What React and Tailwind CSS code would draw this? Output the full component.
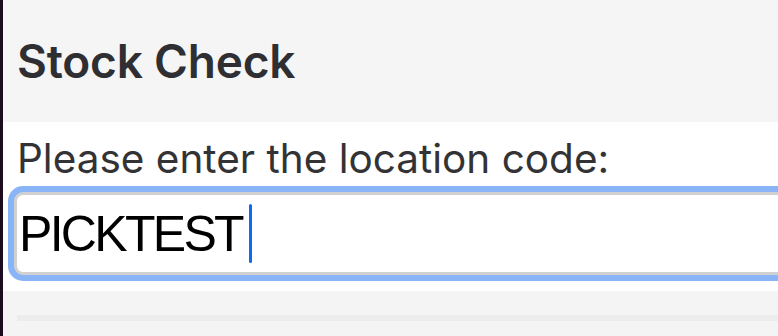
import React from 'react';

export default function App() {
  return (
    <div className="h-[336px] w-[778px] overflow-hidden flex border-l-[3px] border-[#1d0c1f] bg-[#f4f4f4]">
      <div className="flex-1 flex flex-col min-w-0">
        {/* Header */}
        <div className="h-[122px] bg-[#f5f5f5] flex items-center pl-[14px]">
          <h1 className="font-['Inter',sans-serif] font-semibold text-[46px] leading-none text-[#2f2f33] tracking-[-0.2px]">
            Stock Check
          </h1>
        </div>

        {/* Form */}
        <div className="h-[169px] bg-white pt-[16px] pl-[14px]">
          <label className="block font-['Inter',sans-serif] text-[40.5px] leading-[42px] text-[#333336]">
            Please enter the location code:
          </label>
          <div className="mt-[12px] ml-[-3px] w-[820px] h-[83px] rounded-[9px] border-[3px] border-[#d1d1d1] bg-white ring-[6px] ring-[#8ab4f8] flex items-center pl-[2px]">
            <span className="font-['Liberation_Sans',Arial,sans-serif] text-[50px] leading-none text-black tracking-[-2.7px]">
              PICKTEST
            </span>
            <span className="ml-[7px] w-[3.5px] h-[59px] bg-[#0b6cf2] rounded-full" />
          </div>
        </div>

        {/* Bottom */}
        <div className="flex-1 bg-[#f4f4f4] pt-[24px] pl-[14px]">
          <div className="h-[6px] bg-[#ececec]" />
        </div>
      </div>
    </div>
  );
}
